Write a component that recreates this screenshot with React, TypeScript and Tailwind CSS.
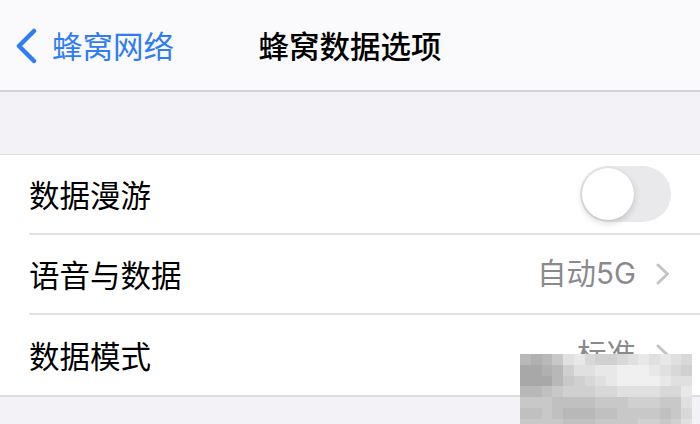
import React from "react"

const FONT = { fontFamily: '"Noto Sans CJK SC", "Noto Sans", sans-serif' }

// pixelated watermark over the bottom-right corner
const MOSAIC: string[][] = [
  ["b8", "b0", "b8", "c8", "e0", "e8", "d8", "d0", "d0", "d8", "e0", "e8", "e0", "e8", "e0", "d8"],
  ["a8", "a8", "b0", "b8", "d0", "e0", "e0", "e8", "e8", "f0", "f0", "f0", "e8", "e0", "d8", "d0"],
  ["a8", "a8", "a8", "b8", "c8", "d0", "d8", "e0", "e8", "f0", "f0", "f0", "f0", "e8", "e0", "e0"],
  ["b8", "b8", "c0", "c8", "d0", "d0", "d0", "d8", "d8", "e0", "e0", "e0", "e0", "d8", "d8", "e8"],
  ["c8", "c8", "c8", "c0", "c0", "c0", "c0", "c8", "c8", "c8", "d0", "d0", "d0", "c8", "c8", "e0"],
  ["c0", "c0", "c8", "c0", "b8", "b8", "b8", "c0", "c0", "c8", "c8", "c8", "c8", "c0", "c8", "d8"],
  ["c8", "c8", "c8", "c8", "c0", "c0", "c0", "c8", "c8", "c8", "c8", "d0", "d0", "c8", "d0", "e0"],
]

const Chevron: React.FC = () => (
  <svg width="14" height="22" viewBox="0 0 14 22" fill="none">
    <path
      d="M2 2l9.5 9-9.5 9"
      stroke="#c4c4c7"
      strokeWidth="3"
      strokeLinecap="round"
      strokeLinejoin="round"
    />
  </svg>
)

const Row: React.FC<{
  label: string
  last?: boolean
  children?: React.ReactNode
}> = ({ label, last, children }) => (
  <div className="flex h-[80px] items-stretch pl-[29px]">
    <div
      className={
        "flex flex-1 items-center justify-between pr-[30px] " +
        (last ? "" : "border-b-2 border-[#e3e3e6]")
      }
    >
      <span className="text-[30.5px] leading-none text-black">{label}</span>
      {children}
    </div>
  </div>
)

const Value: React.FC<{ text: string }> = ({ text }) => (
  <div className="flex items-center gap-[20px]">
    <span className="font-['Inter','Noto_Sans_CJK_SC',sans-serif] text-[29.5px] leading-none text-[#8a8a8e]">
      {text}
    </span>
    <Chevron />
  </div>
)

export default function App() {
  return (
    <div className="relative h-[424px] w-[700px] overflow-hidden bg-[#f2f2f7]" style={FONT}>
      <div className="relative flex h-[92px] items-center border-b-2 border-[#d2d2d6] bg-[#fafafc]">
        <div className="flex items-center gap-[14px] pl-[15px] pt-[1px] text-[#2f7cf6]">
          <svg width="23" height="36" viewBox="0 0 23 36" fill="none">
            <path
              d="M19 3L4 18l15 15"
              stroke="#2f7cf6"
              strokeWidth="4.5"
              strokeLinecap="round"
              strokeLinejoin="round"
            />
          </svg>
          <span className="text-[30.5px] leading-none">蜂窝网络</span>
        </div>
        <div className="absolute inset-x-0 top-0 flex h-full items-center justify-center">
          <span className="text-[30.5px] font-medium leading-none text-black">蜂窝数据选项</span>
        </div>
      </div>

      <div className="h-[63px] border-b border-[#dcdce0]" />

      <div className="border-b-2 border-[#dedee2] bg-white">
        <Row label="数据漫游">
          <div className="-mr-[1px] flex h-[56px] w-[91px] items-center rounded-full bg-[#e9e9eb] p-[2px]">
            <div className="h-[52px] w-[52px] rounded-full bg-white shadow-[0_3px_7px_rgba(0,0,0,0.16),0_0_1px_rgba(0,0,0,0.12)]" />
          </div>
        </Row>
        <Row label="语音与数据">
          <Value text="自动5G" />
        </Row>
        <Row label="数据模式" last>
          <Value text="标准" />
        </Row>
      </div>

      <div className="absolute left-[520px] top-[354px] grid grid-cols-[repeat(16,10.75px)] grid-rows-[repeat(7,10.75px)]">
        {MOSAIC.flatMap((row, r) =>
          row.map((c, i) => (
            <div key={r + "-" + i} style={{ backgroundColor: "#" + c + c + c }} />
          ))
        )}
      </div>
    </div>
  )
}
